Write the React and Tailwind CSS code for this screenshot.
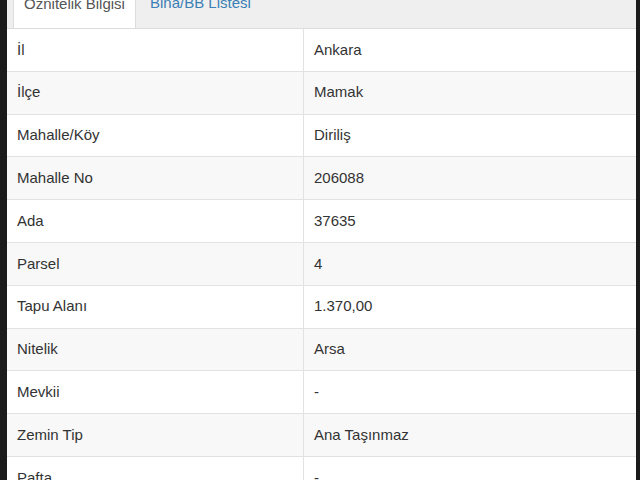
const rows = [
  ["İl", "Ankara"],
  ["İlçe", "Mamak"],
  ["Mahalle/Köy", "Diriliş"],
  ["Mahalle No", "206088"],
  ["Ada", "37635"],
  ["Parsel", "4"],
  ["Tapu Alanı", "1.370,00"],
  ["Nitelik", "Arsa"],
  ["Mevkii", "-"],
  ["Zemin Tip", "Ana Taşınmaz"],
  ["Pafta", "-"],
];

function Tabs() {
  return (
    <div className="flex h-[29px] items-end overflow-hidden border-b border-[#dcdcdc] bg-[#efefef] pl-[6px]">
      <div className="-mb-px flex h-[41px] w-[123px] items-start justify-center border-x border-t border-[#dcdcdc] bg-white pt-[5px] text-[#555]">
        <span className="leading-[20px]">Öznitelik Bilgisi</span>
      </div>
      <div className="flex h-[40px] items-start px-[14px] pt-[5px] text-[#3a7fb5]">
        <span className="leading-[20px]">Bina/BB Listesi</span>
      </div>
    </div>
  );
}

export default function App() {
  return (
    <div
      className="flex h-[480px] w-[640px] overflow-hidden bg-[#1b1b1b] text-[15px] text-[#333]"
      style={{ fontFamily: '"Liberation Sans", Arial, sans-serif' }}
    >
      <div className="ml-[7px] mr-[4px] flex-1 overflow-hidden bg-white">
        <Tabs />
        <div>
          {rows.map(([label, value], i) => (
            <div
              key={label}
              className={`flex h-[42.8px] border-b border-[#e2e2e2] ${
                i % 2 === 1 ? "bg-[#f8f8f8]" : "bg-white"
              }`}
            >
              <div className="flex w-[297px] items-center border-r border-[#e2e2e2] pl-[10px]">
                {label}
              </div>
              <div className="flex flex-1 items-center pl-[10px]">{value}</div>
            </div>
          ))}
        </div>
      </div>
    </div>
  );
}
